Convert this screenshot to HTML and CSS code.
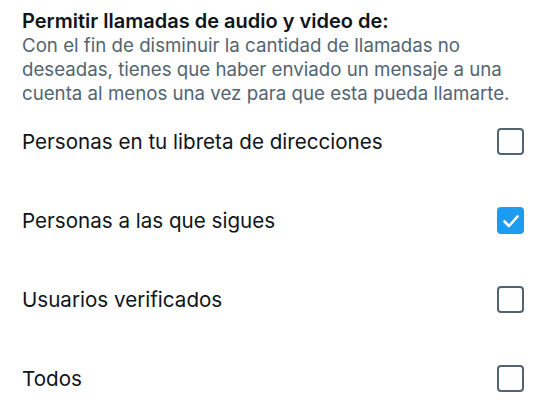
FILE: index.html
```html
<!DOCTYPE html>
<html lang="es">
<head>
<meta charset="utf-8">
<link rel="stylesheet" href="styles.css">
</head>
<body>
<div class="page">
  <div class="header">
    <div class="title">Permitir llamadas de audio y video de:</div>
    <div class="desc">Con el fin de disminuir la cantidad de llamadas no deseadas, tienes que haber enviado un mensaje a una cuenta al menos una vez para que esta pueda llamarte.</div>
  </div>
  <div class="list">
    <div class="row"><span class="label">Personas en tu libreta de direcciones</span><span class="box"></span></div>
    <div class="row"><span class="label">Personas a las que sigues</span><span class="box checked"><svg viewBox="0 0 22 22" width="22" height="22"><path d="M4.5 11.5L9 16L17.5 6.5" fill="none" stroke="#fff" stroke-width="2.6" stroke-linecap="round" stroke-linejoin="round"/></svg></span></div>
    <div class="row"><span class="label">Usuarios verificados</span><span class="box"></span></div>
    <div class="row"><span class="label">Todos</span><span class="box"></span></div>
  </div>
</div>
</body>
</html>
```
FILE: styles.css
```css
html, body {
  margin: 0;
  padding: 0;
  background: #ffffff;
}
.page {
  width: 550px;
  height: 417px;
  box-sizing: border-box;
  padding: 8px 26px 0 22px;
  font-family: "Inter", "Noto Sans", sans-serif;
  color: #0f1419;
}
.title {
  font-size: 20px;
  font-weight: 600;
  line-height: 26px;
}
.desc {
  font-size: 18.7px;
  line-height: 24px;
  color: #536471;
}
.list {
  display: flex;
  flex-direction: column;
  margin-top: -4px;
}
.row {
  height: 79px;
  display: flex;
  align-items: center;
  justify-content: space-between;
}
.label {
  font-size: 20.6px;
}
.box {
  width: 27px;
  height: 27px;
  box-sizing: border-box;
  border: 2.5px solid #536471;
  border-radius: 4px;
  display: flex;
  align-items: center;
  justify-content: center;
}
.box.checked {
  background: #1d9bf0;
  border-color: #1d9bf0;
}
```
